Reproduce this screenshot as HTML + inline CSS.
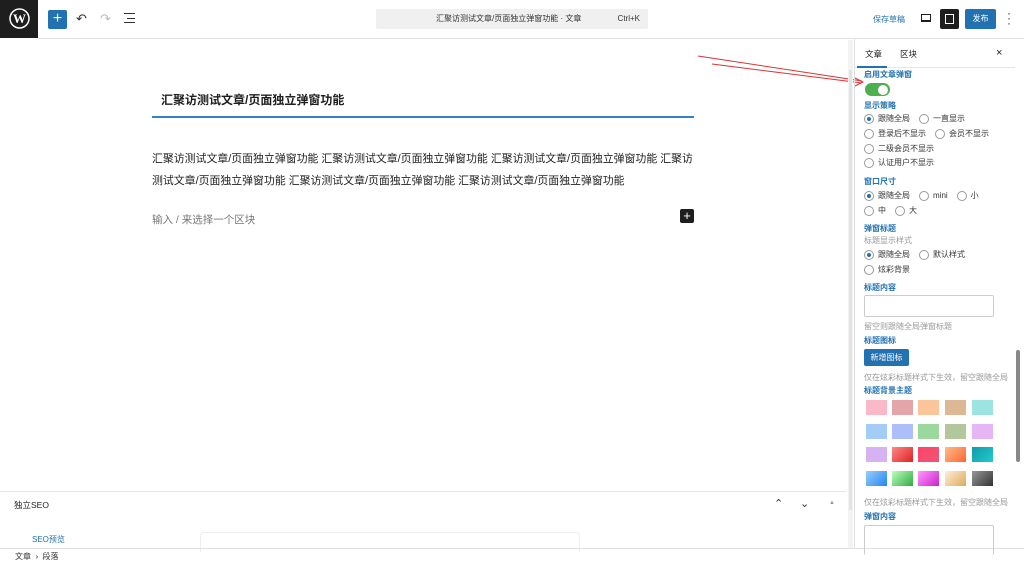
<!DOCTYPE html>
<html><head><meta charset="utf-8"><style>
*{box-sizing:border-box;margin:0;padding:0}
body{width:1024px;height:564px;overflow:hidden;background:#fff;font-family:"Liberation Sans","Noto Sans CJK SC",sans-serif;color:#1e1e1e;position:relative;font-size:12px}
.a{position:absolute}
.lab{color:#2271b1;font-size:8px;font-weight:bold;left:864px}
.r{font-size:8px;color:#333;display:flex;align-items:center;left:864px}
.r span{display:inline-flex;align-items:center;margin-right:9px}
.c{width:10px;height:10px;border:1px solid #999;border-radius:50%;margin-right:4px;display:inline-block;position:relative}
.c.on::after{content:"";position:absolute;left:2px;top:2px;width:4px;height:4px;border-radius:50%;background:#2271b1}
.sw{position:absolute;width:21px;height:15px}
.hint{font-size:8px;color:#999;left:864px}
</style></head><body>
<div class="a" style="left:0;top:0;width:38px;height:38px;background:#1e1e1e"></div>
<svg class="a" style="left:9px;top:8px" width="21" height="21" viewBox="0 0 21 21"><circle cx="10.5" cy="10.5" r="9.5" fill="none" stroke="#fff" stroke-width="1.5"/><text x="10.5" y="15" fill="#fff" font-size="13" font-family="Liberation Serif" font-weight="bold" text-anchor="middle">W</text></svg>
<div class="a" style="left:48px;top:10px;width:19px;height:19px;background:#2271b1;border-radius:2px;color:#fff;font-size:16px;line-height:18px;text-align:center">+</div>
<div class="a" style="left:76px;top:11px;font-size:13px;color:#333">↶</div>
<div class="a" style="left:100px;top:11px;font-size:13px;color:#bbb">↷</div>
<div class="a" style="left:124px;top:13px;width:11px;height:10px;border-top:1.5px solid #333;border-bottom:1.5px solid #333"></div>
<div class="a" style="left:127px;top:17.5px;width:8px;height:1.5px;background:#333"></div>
<div class="a" style="left:376px;top:9px;width:272px;height:20px;background:#f0f0f0;border-radius:2px;font-size:8px;color:#333"><span class="a" style="left:60px;top:4px">汇聚访测试文章/页面独立弹窗功能 · 文章</span><span class="a" style="right:8px;top:5px">Ctrl+K</span></div>
<div class="a" style="left:873px;top:14px;font-size:8px;color:#2271b1">保存草稿</div>
<div class="a" style="left:921px;top:14px;width:10px;height:8px;border:1.5px solid #1e1e1e;border-bottom-width:2px"></div>
<div class="a" style="left:940px;top:9px;width:19px;height:20px;background:#1e1e1e;border-radius:2px"><div class="a" style="left:5px;top:5px;width:9px;height:10px;border:1.5px solid #fff"></div></div>
<div class="a" style="left:965px;top:9px;width:31px;height:20px;background:#2271b1;border-radius:2px;color:#fff;font-size:8px;text-align:center;line-height:20px">发布</div>
<div class="a" style="left:1007px;top:11px;font-size:12px;line-height:5px;color:#333">·<br>·<br>·</div>
<div class="a" style="left:38px;top:38px;width:986px;height:1px;background:#e0e0e0"></div>
<div class="a" style="left:161px;top:91px;font-size:12px;font-weight:bold">汇聚访测试文章/页面独立弹窗功能</div>
<div class="a" style="left:152px;top:116px;width:542px;height:2px;background:#3582c4"></div>
<div class="a" style="left:152px;top:148px;width:548px;font-size:10.9px;line-height:22px;color:#1e1e1e">汇聚访测试文章/页面独立弹窗功能 汇聚访测试文章/页面独立弹窗功能 汇聚访测试文章/页面独立弹窗功能 汇聚访测试文章/页面独立弹窗功能 汇聚访测试文章/页面独立弹窗功能 汇聚访测试文章/页面独立弹窗功能</div>
<div class="a" style="left:152px;top:212px;font-size:10.5px;color:#777">输入 / 来选择一个区块</div>
<div class="a" style="left:680px;top:209px;width:14px;height:14px;background:#1e1e1e;border-radius:2px;color:#fff;font-size:13px;line-height:13px;text-align:center">+</div>
<svg class="a" style="left:0;top:0" width="1024" height="564"><g stroke="#d33" stroke-width="1" fill="none"><line x1="698" y1="56" x2="862" y2="81"/><line x1="712" y1="64" x2="862" y2="83"/><path d="M855 78 L863 82 L855 86"/></g></svg>
<div class="a" style="left:848px;top:40px;width:5px;height:508px;background:#f3f3f3"></div>
<div class="a" style="left:849px;top:70px;width:3px;height:440px;background:#e3e3e3"></div>
<div class="a" style="left:0;top:491px;width:846px;height:1px;background:#e6e6e6"></div>
<div class="a" style="left:14px;top:499px;font-size:8.5px;color:#1e1e1e">独立SEO</div>
<div class="a" style="left:774px;top:497px;font-size:11px;color:#333">⌃</div>
<div class="a" style="left:800px;top:497px;font-size:11px;color:#333">⌄</div>
<div class="a" style="left:829px;top:500px;font-size:6px;color:#999">▲</div>
<div class="a" style="left:32px;top:534px;font-size:8px;color:#2271b1">SEO预览</div>
<div class="a" style="left:200px;top:532px;width:380px;height:20px;border:1px solid #eee;border-bottom:none;border-radius:4px 4px 0 0"></div>
<div class="a" style="left:0;top:548px;width:1024px;height:1px;background:#e0e0e0"></div>
<div class="a" style="left:15px;top:551px;font-size:8px;color:#333">文章 &nbsp;›&nbsp; 段落</div>
<div class="a" style="left:854px;top:38px;width:1px;height:510px;background:#e0e0e0"></div>
<div class="a" style="left:865px;top:48px;font-size:8.5px">文章</div>
<div class="a" style="left:900px;top:48px;font-size:8.5px">区块</div>
<div class="a" style="left:996px;top:47px;font-size:11px">×</div>
<div class="a" style="left:855px;top:67px;width:160px;height:1px;background:#e6e6e6"></div>
<div class="a" style="left:857px;top:66px;width:30px;height:2px;background:#2271b1"></div>
<div class="a lab" style="top:69px">启用文章弹窗</div>
<div class="a" style="left:865px;top:83px;width:25px;height:13px;border-radius:7px;background:#4caf50"><div class="a" style="left:13px;top:1.5px;width:10px;height:10px;border-radius:50%;background:#fff"></div></div>
<div class="a lab" style="top:100px">显示策略</div>
<div class="a r" style="top:113px"><span><i class="c on"></i>跟随全局</span><span><i class="c"></i>一直显示</span></div>
<div class="a r" style="top:128px"><span><i class="c"></i>登录后不显示</span><span><i class="c"></i>会员不显示</span></div>
<div class="a r" style="top:143px"><span><i class="c"></i>二级会员不显示</span></div>
<div class="a r" style="top:157px"><span><i class="c"></i>认证用户不显示</span></div>
<div class="a lab" style="top:176px">窗口尺寸</div>
<div class="a r" style="top:190px"><span><i class="c on"></i>跟随全局</span><span><i class="c"></i>mini</span><span><i class="c"></i>小</span></div>
<div class="a r" style="top:205px"><span><i class="c"></i>中</span><span><i class="c"></i>大</span></div>
<div class="a lab" style="top:223px">弹窗标题</div>
<div class="a hint" style="top:235px">标题显示样式</div>
<div class="a r" style="top:249px"><span><i class="c on"></i>跟随全局</span><span><i class="c"></i>默认样式</span></div>
<div class="a r" style="top:264px"><span><i class="c"></i>炫彩背景</span></div>
<div class="a lab" style="top:282px">标题内容</div>
<div class="a" style="left:864px;top:295px;width:130px;height:22px;border:1px solid #ccc;border-radius:2px"></div>
<div class="a hint" style="top:321px">留空则跟随全局弹窗标题</div>
<div class="a lab" style="top:335px">标题图标</div>
<div class="a" style="left:864px;top:349px;width:45px;height:17px;background:#2271b1;border-radius:2px;color:#fff;font-size:8px;line-height:17px;text-align:center">新增图标</div>
<div class="a hint" style="top:372px">仅在炫彩标题样式下生效，留空跟随全局</div>
<div class="a lab" style="top:385px">标题背景主题</div>
<div class="sw" style="left:866px;top:400px;background:#fbb8c8"></div>
<div class="sw" style="left:892px;top:400px;background:#e3a5aa"></div>
<div class="sw" style="left:918px;top:400px;background:#fcc49a"></div>
<div class="sw" style="left:945px;top:400px;background:#ddb894"></div>
<div class="sw" style="left:972px;top:400px;background:#9de3e2"></div>
<div class="sw" style="left:866px;top:424px;background:#a3ccf6"></div>
<div class="sw" style="left:892px;top:424px;background:#aebef9"></div>
<div class="sw" style="left:918px;top:424px;background:#9ad89e"></div>
<div class="sw" style="left:945px;top:424px;background:#b2c79c"></div>
<div class="sw" style="left:972px;top:424px;background:#e7b4f5"></div>
<div class="sw" style="left:866px;top:447px;background:#d6b2f3"></div>
<div class="sw" style="left:892px;top:447px;background:linear-gradient(135deg,#f88,#d22)"></div>
<div class="sw" style="left:918px;top:447px;background:linear-gradient(135deg,#f46,#e57)"></div>
<div class="sw" style="left:945px;top:447px;background:linear-gradient(135deg,#fb8,#f63)"></div>
<div class="sw" style="left:972px;top:447px;background:linear-gradient(135deg,#19a,#2cc)"></div>
<div class="sw" style="left:866px;top:471px;background:linear-gradient(135deg,#9cf,#28e)"></div>
<div class="sw" style="left:892px;top:471px;background:linear-gradient(135deg,#bfb,#3a4)"></div>
<div class="sw" style="left:918px;top:471px;background:linear-gradient(135deg,#f9f,#c2c)"></div>
<div class="sw" style="left:945px;top:471px;background:linear-gradient(135deg,#fed,#da5)"></div>
<div class="sw" style="left:972px;top:471px;background:linear-gradient(135deg,#999,#333)"></div>
<div class="a hint" style="top:497px">仅在炫彩标题样式下生效，留空跟随全局</div>
<div class="a lab" style="top:511px">弹窗内容</div>
<div class="a" style="left:864px;top:525px;width:130px;height:30px;border:1px solid #ccc;border-radius:2px;border-bottom:none"></div>
<div class="a" style="left:1016px;top:350px;width:4px;height:112px;background:#888;border-radius:2px"></div>
</body></html>
